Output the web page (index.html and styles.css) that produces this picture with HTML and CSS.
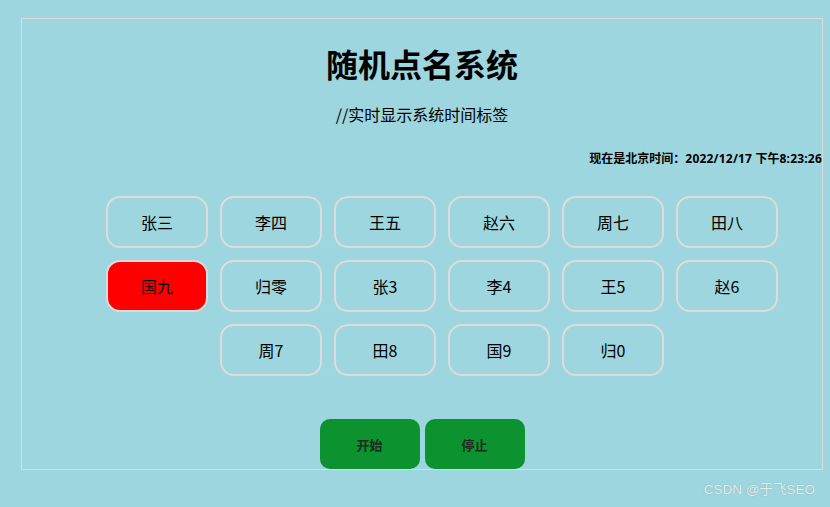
FILE: index.html
```html
<!DOCTYPE html>
<html lang="zh-CN">
<head>
<meta charset="utf-8">
<title>随机点名系统</title>
<link rel="stylesheet" href="styles.css">
</head>
<body>
<div class="frame">
  <h1 class="title">随机点名系统</h1>
  <p class="subtitle">//实时显示系统时间标签</p>
  <p class="clock">现在是北京时间：<span class="num">2022/12/17 </span>下午<span class="num">8:23:26</span></p>
  <div class="names">
    <div class="name">张三</div>
    <div class="name">李四</div>
    <div class="name">王五</div>
    <div class="name">赵六</div>
    <div class="name">周七</div>
    <div class="name">田八</div>
    <div class="name active">国九</div>
    <div class="name">归零</div>
    <div class="name">张3</div>
    <div class="name">李4</div>
    <div class="name">王5</div>
    <div class="name">赵6</div>
    <div class="name">周7</div>
    <div class="name">田8</div>
    <div class="name">国9</div>
    <div class="name">归0</div>
  </div>
  <div class="controls">
    <button class="ctrl">开始</button>
    <button class="ctrl">停止</button>
  </div>
</div>
<div class="watermark">CSDN @于飞SEO</div>
</body>
</html>
```

FILE: styles.css
```css
html, body {
  margin: 0;
  padding: 0;
}
body {
  background: #9dd6de;
  font-family: "Noto Sans CJK SC", "Noto Sans", sans-serif;
  color: #000;
  width: 830px;
  height: 507px;
  overflow: hidden;
  position: relative;
}
.frame {
  margin: 18px 0 0 21px;
  width: 800px;
  height: 450px;
  border: 1px solid #dcdcdc;
  display: flex;
  flex-direction: column;
}
.title {
  margin: 24px 0 0;
  font-size: 32px;
  line-height: 40px;
  font-weight: 700;
  text-align: center;
}
.subtitle {
  margin: 19px 0 0;
  font-size: 16px;
  line-height: 24px;
  text-align: center;
}
.clock {
  margin: 24px 0 0;
  font-size: 12px;
  line-height: 16px;
  font-weight: 700;
  text-align: right;
  white-space: nowrap;
}
.clock .num {
  font-family: "Noto Sans", "Open Sans", sans-serif;
  letter-spacing: 0.2px;
}
.names {
  margin: 23px 0 0 78px;
  width: 684px;
  display: flex;
  flex-wrap: wrap;
  justify-content: center;
}
.name {
  box-sizing: border-box;
  width: 102px;
  height: 52px;
  margin: 6px;
  border: 2px solid #dcdcdc;
  border-radius: 14px;
  display: flex;
  align-items: center;
  justify-content: center;
  font-size: 16px;
}
.name.active {
  background: #ff0000;
}
.controls {
  margin-top: 37px;
  display: flex;
  justify-content: center;
  gap: 5px;
}
.ctrl {
  width: 100px;
  height: 50px;
  border: none;
  border-radius: 10px;
  background: #0c922e;
  color: #1f2a22;
  font-family: "Noto Sans CJK SC", sans-serif;
  font-size: 13px;
  font-weight: 700;
  padding: 0;
}
.watermark {
  position: absolute;
  right: 15px;
  top: 481px;
  font-family: "Liberation Sans", "Noto Sans CJK SC", sans-serif;
  font-size: 13.5px;
  line-height: 18px;
  color: #e6eef0;
  text-shadow: 0 0 1px #7b9ba0;
}
```
